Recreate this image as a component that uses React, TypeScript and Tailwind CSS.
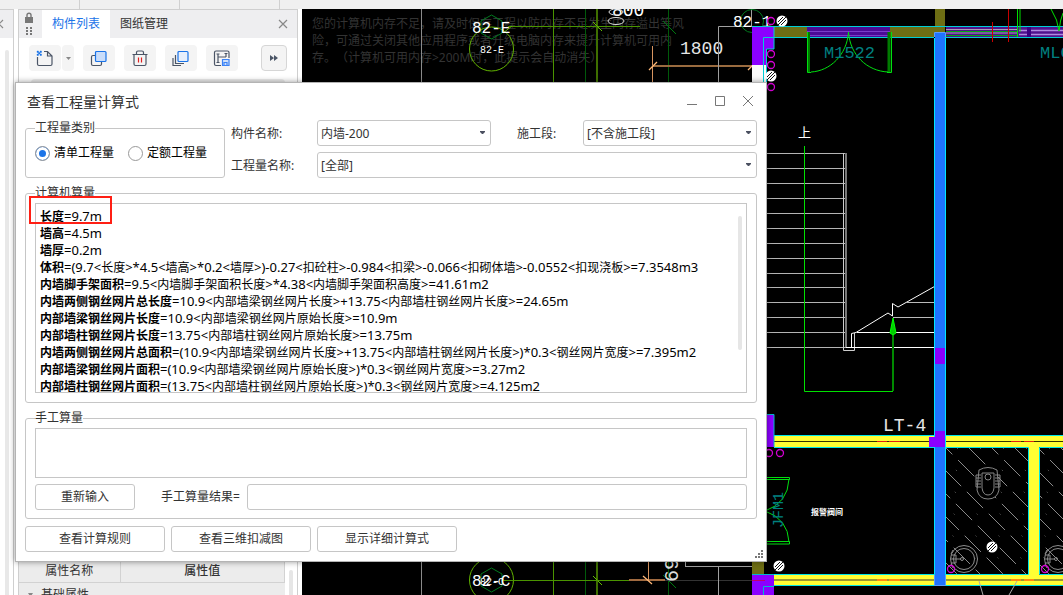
import { useState, type ReactNode } from 'react';

interface Formula {
  name: string;
  value: string;
}

interface PickerProps {
  id: string;
  options: string[];
}

const FORMULAS: Formula[] = [
  { name: '长度', value: '=9.7m' },
  { name: '墙高', value: '=4.5m' },
  { name: '墙厚', value: '=0.2m' },
  { name: '体积', value: '=(9.7<长度>*4.5<墙高>*0.2<墙厚>)-0.27<扣砼柱>-0.984<扣梁>-0.066<扣砌体墙>-0.0552<扣现浇板>=7.3548m3' },
  { name: '内墙脚手架面积', value: '=9.5<内墙脚手架面积长度>*4.38<内墙脚手架面积高度>=41.61m2' },
  { name: '内墙两侧钢丝网片总长度', value: '=10.9<内部墙梁钢丝网片长度>+13.75<内部墙柱钢丝网片长度>=24.65m' },
  { name: '内部墙梁钢丝网片长度', value: '=10.9<内部墙梁钢丝网片原始长度>=10.9m' },
  { name: '内部墙柱钢丝网片长度', value: '=13.75<内部墙柱钢丝网片原始长度>=13.75m' },
  { name: '内墙两侧钢丝网片总面积', value: '=(10.9<内部墙梁钢丝网片长度>+13.75<内部墙柱钢丝网片长度>)*0.3<钢丝网片宽度>=7.395m2' },
  { name: '内部墙梁钢丝网片面积', value: '=(10.9<内部墙梁钢丝网片原始长度>)*0.3<钢丝网片宽度>=3.27m2' },
  { name: '内部墙柱钢丝网片面积', value: '=(13.75<内部墙柱钢丝网片原始长度>)*0.3<钢丝网片宽度>=4.125m2' },
];

const STAIR_YS = [153, 168, 183, 198, 213, 228, 243, 258, 273, 287, 302, 317, 332, 347];
const HATCH_STARTS = [-115, -92, -69, -46, -23, 0, 23, 46, 69, 92, 115];

const CAD_FONT = '"Liberation Mono", "Noto Sans CJK SC", monospace';

const HatchDot = ({ cx, cy }: { cx: number; cy: number }) => (
  <g>
    <circle cx={cx} cy={cy} r="5.5" fill="#fff" />
    <path
      d={`M${cx - 4} ${cy + 1}l5 -5M${cx - 4} ${cy + 4}l8 -8M${cx - 1} ${cy + 4}l5 -5`}
      stroke="#111"
      strokeWidth="1"
    />
  </g>
);

const Ring = ({ cx, cy }: { cx: number; cy: number }) => (
  <circle cx={cx} cy={cy} r="3.5" fill="none" stroke="#d400d4" strokeWidth="1.3" />
);

const Basin = ({ cx, cy }: { cx: number; cy: number }) => (
  <g fill="none" stroke="#8c8c8c">
    <circle cx={cx} cy={cy} r="13.5" />
    <circle cx={cx} cy={cy} r="10.5" />
    <path d={`M${cx - 13} ${cy - 4}h5v8h-5M${cx - 13} ${cy}h10M${cx - 11} ${cy - 9}l-2 4M${cx - 11} ${cy + 9}l-2 -4`} />
    <circle cx={cx - 2} cy={cy} r="1.5" />
  </g>
);

const Drawing = () => (
  <svg
    className="block h-full w-full"
    viewBox="302 9 761 586"
    preserveAspectRatio="xMinYMin slice"
    fontFamily={CAD_FONT}
    fill="none"
  >
    <defs>
      <clipPath id="rooms">
        <path d="M946 448H1028V575H946zM1040 448H1063V575H1040z" />
      </clipPath>
    </defs>

    {/* Low memory notice */}
    <g className="[text-spacing-trim:space-all]" fill="#333" fontSize="12" fontFamily='"Noto Sans", "Noto Sans CJK SC", sans-serif'>
      <text x="312" y="28">您的计算机内存不足，请及时保存工程以防内存不足发生内存溢出等风</text>
      <text x="312" y="45">险，可通过关闭其他应用程序或者升级电脑内存来提升计算机可用内</text>
      <text x="312" y="62">存。（计算机可用内存&gt;200M时，此提示会自动消失）</text>
    </g>

    {/* Grid lines */}
    <path d="M421.5 9V595" stroke="#8a8a8a" />
    <path d="M508 26.5H640M553.5 9V595" stroke="#4a9400" />
    <path d="M585.5 9V595M668.5 9V595" stroke="#005a0a" />
    <path d="M597 9V595" stroke="#3f6f00" strokeWidth="2" />
    <path d="M593 22l9 9M593 576l9 9" stroke="#62c000" />
    <path d="M663 21l13 13M663 575l13 13" stroke="#007a10" />

    {/* Axis bubbles */}
    <circle cx="491.5" cy="49" r="22" stroke="#62b400" />
    <path d="M491.5 15l10.5 6v12l-10.5 6l-10.5 -6v-12z" stroke="#007a1e" />
    <path d="M503 33l9 -7" stroke="#62b400" />
    <text x="472" y="33" fontSize="16" fill="#fff">82-E</text>
    <text x="480" y="53" fontSize="10" fill="#fff">82-E</text>
    <circle cx="491.5" cy="580" r="22" stroke="#62b400" />
    <path d="M491.5 568l10.5 6v12l-10.5 6l-10.5 -6v-12z" stroke="#007a1e" />
    <path d="M503 580.5H629" stroke="#4a9400" />
    <path d="M629 580H665" stroke="#a06a40" strokeWidth="2" />
    <path d="M665 580.5H752" stroke="#333" />
    <text x="472" y="586" fontSize="16" fill="#fff">82-C</text>
    <text x="480" y="585" fontSize="10" fill="#fff">82-C</text>

    {/* Dimensions */}
    <path d="M652.5 46V82M648.5 562V580" stroke="#d89560" />
    <path d="M652 66H752" stroke="#9a6b3f" strokeWidth="2" />
    <path d="M649 70l8 -8M748 70l8 -8M643 576l9 8" stroke="#ffb878" strokeWidth="1.3" />
    <text x="612" y="16" fontSize="18" fill="#fff">800</text>
    <ellipse cx="616" cy="12" rx="7" ry="3" stroke="#ddd" />
    <ellipse cx="616" cy="21" rx="8" ry="3.5" stroke="#ddd" />
    <text x="680" y="54" fontSize="18" fill="#e6e6e6">1800</text>
    <text x="678" y="582" fontSize="20" fill="#ddd" transform="rotate(-90 678 582)">69</text>
    <path d="M718.5 82V26.5H752M751.5 9V26M685 566.5H752M685.5 562V566M718.5 566V595" stroke="#a0a0a0" />
    <circle cx="752" cy="21" r="11.5" stroke="#007a1e" />
    <text x="733" y="27" fontSize="16" fill="#fff">82-1</text>

    {/* Top wall */}
    <path d="M774 27H940V37H774zM935 9H945V34H935z" fill="#6e6e14" />
    <path d="M752 27H774V49H766V65H752z" fill="#8b00ff" />
    <path d="M752 65H766V82H752z" fill="#fafafa" />
    <path d="M763.5 82V37.5H934M766.5 82V49H774V26.5" stroke="#00cfd6" />
    <path d="M752 26.5H1063M945 37.5H1063" stroke="#00cfd6" />
    <path d="M807 27H890V37H807z" fill="#4b0a96" />
    <path d="M807 31.5H890M807 35.5H890" stroke="#7a3cc8" />
    <path d="M946 27H1063V37H946z" fill="#50128c" />
    <path d="M1019 30.5H1063M1019 34.5H1063" stroke="#b08ae0" strokeWidth="1.5" />
    <path d="M946 29.5H1018M946 33H1018" stroke="#a9a0b8" />
    <path d="M946 31.5H1018M946 35.5H1018" stroke="#00a810" />
    <path d="M1027 27H1031V37H1027z" fill="#3a0080" />
    <path d="M992.5 22V42M1008.5 9V42" stroke="#c80000" />
    <path d="M1017.5 9V37M1020 9V32M1051 9Q1058 20 1059 31Q1060 20 1063 13" stroke="#00e000" />
    <path d="M808.5 32V72M889 32V72" stroke="#007a00" strokeWidth="3" />
    <path d="M807.5 32V72.5H811M891.5 32V72.5H887M848.5 32C847 55 830 71 811 72M848.5 32C850 55 867 71 888 72" stroke="#00e010" />
    <text x="824" y="58" fontSize="17" fill="#008080">M1522</text>
    <text x="1040" y="58" fontSize="17" fill="#008080">MLC</text>
    <HatchDot cx={782} cy={21} />
    <HatchDot cx={771} cy={76} />
    <Ring cx={771} cy={21} />
    <Ring cx={771} cy={54} />
    <Ring cx={771} cy={65} />
    <Ring cx={771} cy={87} />

    {/* Stairs */}
    <text x="798" y="137" fontSize="13" fill="#fff">上</text>
    <g stroke="#b4b4b4">
      {STAIR_YS.map(y => (
        <path key={y} d={`M760 ${y + 0.5}H846`} />
      ))}
    </g>
    <path d="M846 153V347" stroke="#777" strokeWidth="2" />
    <path d="M843.5 153V350.5H854.5V333" stroke="#ccc" />
    <path d="M846 347.5H934.5V286.5L898 307L892.5 303.5V316L888 313L856 332.5L851.5 333.5V347M857 332.5H934" stroke="#fff" />
    <path d="M893 317.5H934M906 302.5H934" stroke="#bbb" />
    <path d="M893 391V320" stroke="#008a00" strokeWidth="2" />
    <path d="M804.5 146V391.5H893" stroke="#00e000" />
    <path d="M893 318L896 333L893 335L890 333z" fill="#00d000" stroke="#00ff00" />
    <text x="883" y="431" fontSize="18" fill="#e6e6e6">LT-4</text>

    {/* Hatched rooms */}
    <g clipPath="url(#rooms)">
      {HATCH_STARTS.map((dx, i) => (
        <path
          key={dx}
          d={`M${946 + dx} 448l130 130`}
          stroke="#8a8a8a"
          strokeDasharray="23 8"
          strokeDashoffset={i % 2 ? 14 : 0}
        />
      ))}
      {HATCH_STARTS.map(dx => (
        <path key={dx} d={`M${957 + dx} 448l130 130`} stroke="#777" strokeDasharray="1 30" />
      ))}
    </g>
    <g stroke="#858585">
      <path d="M979 470Q988 465 997 470L999 490Q997 499 988 499Q979 499 977 490z" fill="#000" />
      <path d="M982 473H994V488Q993 495 988 495Q983 495 982 488z" />
      <circle cx="988" cy="477" r="3" />
      <path d="M976 475H981M976 478H981M976 481H981M976 484H981M976 487H981M995 475H1000M995 478H1000M995 481H1000M995 484H1000M995 487H1000M976 475V487M1000 475V487" />
    </g>
    <Basin cx={964} cy={559} />
    <Basin cx={1058} cy={559} />
    <Ring cx={951} cy={569} />
    <Ring cx={1045} cy={569} />
    <HatchDot cx={992} cy={547} />

    {/* Yellow walls */}
    <path d="M767 436H1063V447H767zM767 575H1063V585H767zM1028 447H1039V575H1028z" fill="#ffff33" />
    <path d="M774 435.5H1063M774 447.5H1028.5V574.5H774M1063 447.5H1039.5V574.5H1063M774 585.5H1063" stroke="#00e5e5" />
    <path d="M774 441.5H1063" stroke="#333300" />
    <path d="M774 580H1063" stroke="#999930" strokeWidth="2" />
    <path d="M877 441.5H887M889 441.5H900M1011 441.5H1021M1024 441.5H1034" stroke="#e02010" />
    <path d="M877 580H887M889 580H900M1011 580H1021M1024 580H1034" stroke="#ff8a10" strokeWidth="2" />
    <path d="M979 581L983 595M1017 581L1009 595" stroke="#aaa" />

    {/* Selected wall */}
    <path d="M935 32H945V585H935z" fill="#1f73ff" />
    <path d="M934.5 38V574M945.5 38V574" stroke="#00e5ff" />
    <path d="M934.5 575V585.5H945.5V575M934.5 37V32.5H945.5V37" stroke="#5a9cff" />
    <path d="M935 348H945V364H935zM935 431H945V447H929V437H935zM760 414H774V447H760zM752 575H774V595H752z" fill="#8b00ff" />
    <path d="M767 414.5H774V447M752 574.5H774M763.5 595V586.5H774" stroke="#00b8cc" />
    <path d="M752 562H764V574H752z" fill="#6e6e14" />
    <path d="M752 580.5H765" stroke="#c0006a" />
    <Ring cx={769} cy={453} />
    <Ring cx={780} cy={453} />

    {/* Valve room */}
    <path d="M767 477.5H789.5V479.5H767M767 541.5H789.5V544H767M789 479Q788 503 765 511Q788 519 789 542" stroke="#00e010" />
    <text x="783" y="528" fontSize="15" fill="#008080" transform="rotate(-90 783 528)">JFM1</text>
    <text x="811" y="515" fontSize="8" fontWeight="700" fill="#fff">报警阀间</text>
    <HatchDot cx={779} cy={566} />
  </svg>
);

const ToolButton = ({ label, children }: { label: string; children: ReactNode }) => (
  <button aria-label={label} className="flex h-[26px] w-8 items-center justify-center rounded-sm bg-[#f4f4f4]">
    <svg width="18" height="18" viewBox="0 0 18 18" fill="none" stroke="#4b5566" strokeWidth="1.2">
      {children}
    </svg>
  </button>
);

const SidePanel = () => (
  <aside className="flex w-[280px] shrink-0 flex-col border-x border-t border-[#cfcfcf] bg-white">
    <div className="flex h-7 shrink-0 items-stretch bg-[#eeeef0]">
      <div className="flex w-[23px] items-center justify-center pr-[3px]">
        <svg width="10" height="24" viewBox="0 0 10 24" fill="#777">
          <path d="M1 5H9V11H1z" />
          <path d="M3 5V3Q3 1.200 5 1.200Q7 1.200 7 3V5" fill="none" stroke="#777" strokeWidth="1.4" />
          <path d="M2 15h2v2h-2zM6 15h2v2h-2zM2 18h2v2h-2zM6 18h2v2h-2zM2 21h2v2h-2zM6 21h2v2h-2z" />
        </svg>
      </div>
      <button className="bg-white px-[10px] text-[#1a73e8]">构件列表</button>
      <button className="px-[10px]">图纸管理</button>
      <button aria-label="关闭" className="mr-[6px] ml-auto flex w-4 items-center justify-center">
        <svg width="10" height="10" viewBox="0 0 10 10" stroke="#888" strokeWidth="1.2">
          <path d="M1 1l8 8M9 1l-8 8" />
        </svg>
      </button>
    </div>

    <div className="mt-[7px] flex items-center pr-[10px] pl-[10px]">
      <div className="flex gap-[9px]">
        <div className="flex gap-px">
          <ToolButton label="新建">
            <path d="M8 2.500H11.500L16 7V15Q16 16.500 14.500 16.500H3Q1.500 16.500 1.500 15V8M11.500 2.500V7H16" />
            <path d="M1 2h1.500v1.500h-1.500zM4 2h1.500v1.500h-1.500zM2.500 3.500h1.500v1.500h-1.500zM1 5h1.500v1.500h-1.500zM4 5h1.500v1.500h-1.500z" fill="#1a73e8" stroke="#1a73e8" strokeWidth=".4" />
          </ToolButton>
          <button aria-label="新建选项" className="flex h-[26px] w-3 items-center justify-center rounded-sm bg-[#f4f4f4]">
            <svg width="5" height="3" viewBox="0 0 5 3" fill="#888"><path d="M0 0H5L2.500 3z" /></svg>
          </button>
        </div>
        <ToolButton label="复制">
          <rect x="1.500" y="6.500" width="10" height="10" rx="1.500" />
          <rect x="5.500" y="2.500" width="10.500" height="10" rx="1" fill="#c9ddfa" stroke="#1a73e8" />
        </ToolButton>
        <ToolButton label="删除">
          <path d="M1.500 5.500H16.500M3 5.500V15Q3 16.500 4.500 16.500H13.500Q15 16.500 15 15V5.500M5.500 5V3.500Q5.500 2 7 2H11Q12.500 2 12.500 3.500V5" />
          <path d="M7.500 8.500V13.500M10.500 8.500V13.500" stroke="#e02020" />
        </ToolButton>
        <ToolButton label="层间复制">
          <path d="M3.500 6V14.500H12M1 9V16.500H9" />
          <rect x="6" y="2.500" width="10" height="10" rx="1" fill="#e6effc" stroke="#1a73e8" />
        </ToolButton>
        <ToolButton label="存档">
          <path d="M8 16.500H3Q1.500 16.500 1.500 15V3.500Q1.500 2 3 2H14.500Q16 2 16 3.500V9M5 5V13.500M5 8H13M13 4.500V8M3.500 5H6.500M3.500 13.500H6.500M11.500 4.500H14.500" />
          <path d="M9.500 10.500H16V16.500H9.500z" fill="#cfe0fa" stroke="#3b82f6" />
          <path d="M11 16V13.500H14V16" stroke="#3b82f6" />
        </ToolButton>
      </div>
      <button aria-label="更多" className="ml-auto flex h-[26px] w-[26px] items-center justify-center rounded-sm border border-[#d6d6d6] bg-[#f4f4f4]">
        <svg width="8" height="6" viewBox="0 0 8 6" fill="#4b5566"><path d="M0 0L4 3L0 6zM4 0L8 3L4 6z" /></svg>
      </button>
    </div>

    <div className="mx-3 mt-2 flex-1 rounded-t-sm bg-[#ececec]" />

    <div className="flex h-[37px] shrink-0 overflow-hidden">
      <table className="h-12 flex-1 border-collapse bg-[#ececec] text-center">
        <thead>
          <tr className="h-6">
            <th className="w-[101px] border border-l-0 border-[#d2d2d2] font-normal">属性名称</th>
            <th className="border border-[#d2d2d2] font-medium">属性值</th>
          </tr>
        </thead>
        <tbody>
          <tr className="h-6">
            <td colSpan={2} className="pl-[9px] text-left">
              <span className="flex items-center gap-2">
                <svg width="5" height="4" viewBox="0 0 5 4" fill="#888"><path d="M0 0H5L2.500 4z" /></svg>
                基础属性
              </span>
            </td>
          </tr>
        </tbody>
      </table>
      <div className="flex w-3 justify-center pt-3">
        <div className="w-1 rounded-t-full bg-[#e6e6e6]" />
      </div>
    </div>
  </aside>
);

const Picker = ({ id, options }: PickerProps) => (
  <div className="relative min-w-0 flex-1">
    <select id={id} className="h-[26px] w-full appearance-none rounded-[3px] border border-[#c6c6c6] bg-white pt-px pl-[3px] text-[#333] outline-none">
      {options.map(o => <option key={o}>{o}</option>)}
    </select>
    <svg className="pointer-events-none absolute top-[11px] right-[6px]" width="5" height="4" viewBox="0 0 5 4" fill="#4b5060">
      <path d="M0 0H5V1L3 3H2L0 1z" />
    </svg>
  </div>
);

// Latin runs sit one pixel larger than the Chinese text around them
const FormulaText = ({ value }: { value: string }) => (
  <>
    {value.split(/([\u4e00-\u9fff]+)/).map((part, i) => (
      i % 2 ? part : <span key={i} className="text-[13px]">{part}</span>
    ))}
  </>
);

const FormulaDialog = () => {
  const [kind, setKind] = useState('清单工程量');
  const actionClass = 'h-[26px] w-[140px] rounded-[3px] border border-[#c6c6c6] bg-white';

  return (
    <section
      role="dialog"
      aria-label="查看工程量计算式"
      className="absolute top-[82px] left-[15px] w-[752px] border border-[#b4b4b4] bg-white px-[9px] pb-[9px] shadow-[0_0_6px_rgba(0,0,0,0.4)]"
    >
      <header className="flex h-[37px] items-center pl-[2px]">
        <h1 className="flex-1 text-sm">查看工程量计算式</h1>
        <div className="flex gap-3 pr-px text-[#777]">
          <button aria-label="最小化">
            <svg width="16" height="16" viewBox="0 0 16 16" stroke="currentColor"><path d="M3 10.500H13" /></svg>
          </button>
          <button aria-label="最大化">
            <svg width="16" height="16" viewBox="0 0 16 16" fill="none" stroke="currentColor"><path d="M3.500 2.500H12.500V11.500H3.500z" /></svg>
          </button>
          <button aria-label="关闭窗口">
            <svg width="16" height="16" viewBox="0 0 16 16" stroke="currentColor"><path d="M3 2L13 12M13 2L3 12" /></svg>
          </button>
        </div>
      </header>

      <div className="flex flex-col gap-[7px]">
        <div className="flex gap-[6px]">
          <fieldset className="w-[200px] rounded-[3px] border border-[#c6c6c6] px-[9px]">
            <legend className="leading-4">工程量类别</legend>
            <div className="flex gap-[14px] pt-[9px] text-black">
              {['清单工程量', '定额工程量'].map(k => (
                <label key={k} className="flex items-center gap-1">
                  <input
                    type="radio"
                    name="kind"
                    checked={kind === k}
                    onChange={() => setKind(k)}
                    className="h-[15px] w-[15px] appearance-none rounded-full border border-[#999] bg-white checked:bg-[#1a73e8] checked:shadow-[inset_0_0_0_3px_#fff]"
                  />
                  {k}
                </label>
              ))}
            </div>
          </fieldset>
          <div className="flex flex-1 flex-col gap-[6px]">
            <div className="flex items-center">
              <label htmlFor="member" className="w-[86px] pt-px">构件名称:</label>
              <Picker id="member" options={['内墙-200']} />
              <label htmlFor="stage" className="ml-[26px] w-[66px] pt-px">施工段:</label>
              <Picker id="stage" options={['[不含施工段]']} />
            </div>
            <div className="flex items-center">
              <label htmlFor="quantity" className="w-[86px] pt-px">工程量名称:</label>
              <Picker id="quantity" options={['[全部]']} />
            </div>
          </div>
        </div>

        <fieldset className="relative rounded-[3px] border border-[#c6c6c6] px-[9px] pb-[9px]">
          <legend className="leading-4">计算机算量</legend>
          <div className="mt-[2px] flex h-[190px] overflow-hidden border border-[#c6c6c6] pt-1 pr-1 pl-1 text-black">
            <div className="flex-1 whitespace-nowrap">
              {FORMULAS.map(f => (
                <p key={f.name} className="h-[17px] leading-[17px]">
                  <b className="font-bold">{f.name}</b>
                  <FormulaText value={f.value} />
                </p>
              ))}
            </div>
            <div className="mt-2 h-[134px] w-1 rounded-full bg-[#e6e6e6]" />
          </div>
          <div className="absolute -top-[5px] left-[3px] h-7 w-[83px] border-2 border-[#ff1f14]" />
        </fieldset>

        <fieldset className="rounded-[3px] border border-[#c6c6c6] px-[9px] pb-2">
          <legend className="leading-4">手工算量</legend>
          <textarea aria-label="手工算量" className="mt-[2px] block h-[50px] w-full resize-none border border-[#c6c6c6] outline-none" />
          <div className="mt-[6px] flex items-center">
            <button className="h-[26px] w-[100px] rounded-[3px] border border-[#c6c6c6] bg-white">重新输入</button>
            <label htmlFor="result" className="ml-[26px] w-[86px]">手工算量结果=</label>
            <input id="result" className="h-[26px] min-w-0 flex-1 rounded-[3px] border border-[#c6c6c6] px-1 outline-none" />
          </div>
        </fieldset>

        <div className="flex gap-[6px]">
          <button className={actionClass}>查看计算规则</button>
          <button className={actionClass}>查看三维扣减图</button>
          <button className={actionClass}>显示详细计算式</button>
        </div>
      </div>

      <svg className="absolute right-[3px] bottom-[3px]" width="8" height="8" viewBox="0 0 8 8" fill="#777">
        <path d="M6 0h2v2h-2zM3 3h2v2h-2zM6 3h2v2h-2zM0 6h2v2h-2zM3 6h2v2h-2zM6 6h2v2h-2z" />
      </svg>
    </section>
  );
};

export default function App() {
  return (
    <div className="relative flex h-screen flex-col overflow-hidden bg-white font-['Noto_Sans','Noto_Sans_CJK_SC',sans-serif] text-[12px] leading-4 text-[#333]">
      <div className="flex h-[9px] shrink-0 bg-[#f0f0f0]">
        <div className="w-20 border-r border-[#d0d0d0]" />
        <div className="w-[100px] border-r border-[#d0d0d0]" />
        <div className="w-[100px] border-r border-[#d0d0d0]" />
      </div>
      <div className="flex min-h-0 flex-1">
        <div className="mr-1 flex w-[14px] shrink-0 flex-col border-t border-r border-[#cfcfcf]">
          <div className="flex h-7 items-center bg-[#eeeef0]">
            <svg width="4" height="10" viewBox="0 0 4 10" stroke="#888" strokeWidth="1.2"><path d="M-1 5l4 -4M-1 5l4 4" /></svg>
          </div>
          <div className="mt-3 ml-[5px] w-1 flex-1 rounded-t-full bg-[#e8e8e8]" />
        </div>
        <SidePanel />
        <main className="ml-1 min-w-0 flex-1 overflow-hidden bg-black">
          <Drawing />
        </main>
      </div>
      <FormulaDialog />
    </div>
  );
}
